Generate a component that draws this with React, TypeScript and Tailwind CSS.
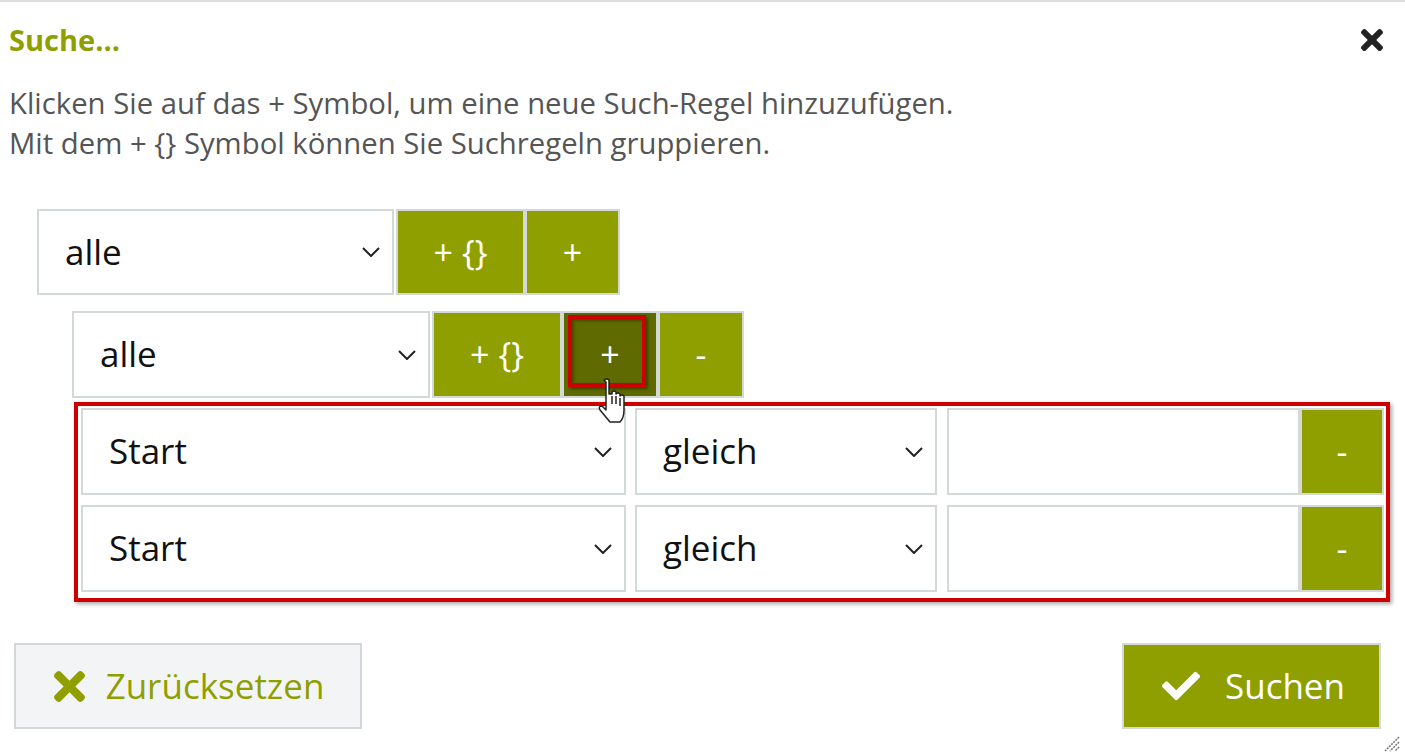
import { FaTimes, FaCheck } from "react-icons/fa";

const font = { fontFamily: '"Open Sans", "Noto Sans", sans-serif' };

function Chevron() {
  return (
    <svg width="18" height="10" viewBox="0 0 18 10" className="shrink-0">
      <polyline points="1,1 9,9 17,1" fill="none" stroke="#222" strokeWidth="2" />
    </svg>
  );
}

function Select({ value, className }: { value: string; className: string }) {
  return (
    <div className={`flex items-center justify-between border-2 border-[#d3d8d8] bg-white pl-[26px] pr-[12px] text-[35px] text-[#111] ${className}`}>
      <span>{value}</span>
      <Chevron />
    </div>
  );
}

function Btn({ label, className, dark }: { label: string; className: string; dark?: boolean }) {
  return (
    <div className={`flex items-center justify-center border-2 border-[#d3d8d8] text-[34px] text-white ${dark ? "bg-[#5f6a00]" : "bg-[#8f9f00]"} ${className}`}>
      {label}
    </div>
  );
}

function RuleRow() {
  return (
    <div className="flex h-[87px]">
      <Select value="Start" className="w-[545px]" />
      <Select value="gleich" className="ml-[9px] w-[302px]" />
      <div className="ml-[10px] w-[353px] border-2 border-[#d3d8d8] bg-white" />
      <Btn label="-" className="w-[84px]" />
    </div>
  );
}

export default function App() {
  return (
    <div className="relative min-h-[754px] w-full border-t-2 border-[#d9dddd] bg-white text-[#555]" style={font}>
      <div className="flex items-center justify-between pl-[9px] pr-[22px] pt-[20px]">
        <h1 className="text-[29px] font-bold leading-[36px] text-[#8f9f00]">Suche...</h1>
        <FaTimes className="h-[32px] w-[22px] text-[#222]" />
      </div>
      <div className="mt-[25px] pl-[9px] text-[29.3px] leading-[40px]">
        <p>Klicken Sie auf das + Symbol, um eine neue Such-Regel hinzuzufügen.</p>
        <p>Mit dem + {"{}"} Symbol können Sie Suchregeln gruppieren.</p>
      </div>

      <div className="ml-[37px] mt-[46px]">
        <div className="flex h-[86px]">
          <Select value="alle" className="w-[357px]" />
          <Btn label="+ {}" className="ml-[2px] w-[129px]" />
          <Btn label="+" className="w-[95px]" />
        </div>

        <div className="ml-[35px] mt-[16px]">
          <div className="flex h-[87px]">
            <Select value="alle" className="w-[358px]" />
            <Btn label="+ {}" className="ml-[2px] w-[130px]" />
            <div className="relative">
              <Btn label="+" className="h-full w-[96px]" dark />
              <div className="absolute left-[6px] top-[4px] h-[72px] w-[78px] border-4 border-[#cc0000] shadow-[2px_2px_3px_rgba(0,0,0,0.4),inset_2px_2px_3px_rgba(0,0,0,0.3)]" />
            </div>
            <Btn label="-" className="w-[86px]" />
          </div>

          <div className="ml-[2px] mt-[4px] flex w-[1316px] flex-col gap-[10px] border-4 border-[#cc0000] pb-[6px] pl-[3px] pr-[2px] pt-[2px] shadow-[2px_2px_4px_rgba(0,0,0,0.35)]">
            <RuleRow />
            <RuleRow />
          </div>
        </div>
      </div>

      <div className="mt-[41px] flex justify-between pl-[14px] pr-[24px]">
        <div className="flex h-[86px] w-[348px] items-center justify-center gap-[21px] border-2 border-[#d3d8d8] bg-[#f3f4f6] pl-[2px] text-[35px] text-[#8f9f00]">
          <FaTimes className="h-[45px] w-[31px]" />
          <span>Zurücksetzen</span>
        </div>
        <div className="flex h-[86px] w-[259px] items-center justify-center gap-[25px] border-2 border-[#d3d8d8] bg-[#8f9f00] pl-[4px] text-[35px] text-white">
          <FaCheck className="h-[38px] w-[38px]" />
          <span>Suchen</span>
        </div>
      </div>

      <svg className="absolute left-[598px] top-[376px]" width="30" height="52" viewBox="0 0 30 52">
        <path d="M6 2 q3 -2 5 0 v14 h3 v-2 q2 -2 4 0 v2 q2 -2 4 0 v2 q2 -2 4 0 v14 q0 8 -4 12 h-10 l-10 -12 q-2 -4 2 -4 l4 4 v-28 z" fill="#fff" stroke="#222" strokeWidth="1.5" strokeLinejoin="round" />
        <path d="M14 18 v8 M18 18 v8 M22 20 v8" stroke="#222" strokeWidth="1.5" />
      </svg>

      <svg className="absolute left-[1383px] top-[733px]" width="17" height="17" viewBox="0 0 17 17">
        <path d="M16 2 L2 16 M16 7 L7 16 M16 12 L12 16" stroke="#777" strokeWidth="1.5" strokeDasharray="2 1" />
      </svg>
    </div>
  );
}
